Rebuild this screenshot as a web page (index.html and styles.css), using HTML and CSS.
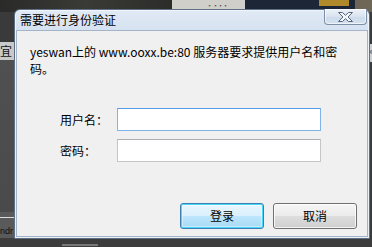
FILE: index.html
```html
<!DOCTYPE html>
<html lang="zh-CN">
<head>
<meta charset="utf-8">
<title>需要进行身份验证</title>
<link rel="stylesheet" href="styles.css">
</head>
<body>
<div class="desktop">
  <div class="bg-top">
    <div class="bg-dark"></div>
    <div class="bg-light"><span class="bg-small">▪ ▪▪▪</span></div>
    <div class="bg-navy"><span class="bg-gold"></span></div>
    <div class="bg-brown"></div>
  </div>
  <div class="bg-left">
    <span class="bg-word bg-yi">宜</span>
    <span class="bg-line"></span>
    <span class="bg-word bg-ndr">ndr</span>
  </div>
  <div class="bg-right">
    <span class="bg-word bg-a">阿</span>
  </div>
  <div class="bg-bottom"><span class="bg-dash"></span></div>

  <div class="dialog">
    <div class="titlebar">
      <span class="title">需要进行身份验证</span>
      <button class="close" aria-label="关闭">
        <svg width="19" height="12" viewBox="0 0 19 12">
          <path d="M2.5 1.5 L6.5 1.5 L9.5 4.3 L12.5 1.5 L16.5 1.5 L12 6 L16.5 10.5 L12.5 10.5 L9.5 7.7 L6.5 10.5 L2.5 10.5 L7 6 Z" fill="#f4f7fb" stroke="#56657a" stroke-width="1" stroke-linejoin="round"/>
        </svg>
      </button>
    </div>
    <div class="client">
      <p class="message">yeswan上的 www.ooxx.be:80 服务器要求提供用户名和密码。</p>
      <div class="form">
        <label class="label" for="u">用户名：</label>
        <input class="field field-focus" id="u" type="text">
        <label class="label" for="p">密码：</label>
        <input class="field" id="p" type="password">
      </div>
      <div class="actions">
        <button class="btn btn-default">登录</button>
        <button class="btn">取消</button>
      </div>
    </div>
  </div>
</div>
</body>
</html>
```
FILE: styles.css
```css
html, body {
  margin: 0;
  padding: 0;
}
body {
  width: 372px;
  height: 247px;
  overflow: hidden;
  background: #3b3b3b;
  font-family: "Noto Sans CJK SC", "Noto Sans", sans-serif;
}
.desktop {
  position: relative;
  width: 372px;
  height: 247px;
  background: #454545;
}
.bg-top {
  position: absolute;
  left: 0;
  top: 0;
  width: 372px;
  height: 12px;
  display: flex;
}
.bg-dark { width: 172px; background: linear-gradient(90deg, #2a2a2a, #3a3a36 50%, #2c2c2a); }
.bg-light { width: 73px; background: #d0cfca; position: relative; }
.bg-small { position: absolute; left: 35px; top: 1px; font-size: 5px; color: #555; }
.bg-navy { width: 110px; background: #1c2636; display: flex; justify-content: flex-end; }
.bg-gold { width: 30px; height: 6px; margin-right: 6px; background: #b08a2a; }
.bg-brown { flex: 1; background: #6e6656; }

.bg-left {
  position: absolute;
  left: 0;
  top: 12px;
  width: 14px;
  height: 226px;
  background: linear-gradient(180deg, #3a3a3a 0, #3a3a3a 30px, #c9c9c9 30px, #c9c9c9 48px, #505050 48px, #4a4a4a 200px, #5a5a5a 200px);
  overflow: hidden;
}
.bg-word {
  position: absolute;
  font-family: "Noto Sans CJK SC", "Noto Sans", sans-serif;
  font-size: 12px;
  line-height: 14px;
  color: #111;
}
.bg-yi { left: 0; top: 32px; }
.bg-line { position: absolute; left: 0; top: 205px; width: 14px; height: 1px; background: #ddd; }
.bg-ndr { left: 0; top: 212px; color: #0e0e0e; font-family: "Liberation Sans", sans-serif; font-size: 9px; }
.bg-right {
  position: absolute;
  left: 368px;
  top: 12px;
  width: 4px;
  height: 226px;
  background: linear-gradient(180deg, #3a3a3a 0, #3a3a3a 32px, #cfcfcf 32px, #cfcfcf 50px, #3b3b3b 50px);
  overflow: hidden;
}
.bg-a { left: 0; top: 38px; font-size: 4px; line-height: 5px; color: #222; }
.bg-bottom {
  position: absolute;
  left: 0;
  top: 238px;
  width: 372px;
  height: 9px;
  background: #3c3c3c;
}
.bg-dash { position: absolute; left: 62px; top: 6px; width: 36px; height: 2px; background: #777; }

.dialog {
  position: absolute;
  left: 14px;
  top: 9px;
  width: 352px;
  height: 227px;
  display: flex;
  flex-direction: column;
  padding: 0 1px 1px 1px;
  border: 1px solid #5f6f85;
  border-radius: 6px 6px 0 0;
  background: linear-gradient(180deg, #e1eaf5 0, #d6e2f1 20px, #cfdcec 100%);
  box-shadow: inset 0 0 0 1px rgba(255,255,255,0.55);
}
.titlebar {
  height: 20px;
  display: flex;
  align-items: flex-start;
  justify-content: space-between;
}
.title {
  margin: 2px 0 0 4px;
  font-size: 12px;
  line-height: 16px;
  color: #000;
}
.close {
  width: 43px;
  height: 16px;
  margin: -1px 1px 0 0;
  padding: 0;
  border: 1px solid #7f8fa6;
  border-top: 0;
  border-radius: 0 0 4px 4px;
  background: linear-gradient(180deg, #eef3f9, #d9e3ef 50%, #cddbeb 51%, #d5e1ef);
  box-shadow: inset 0 0 0 1px rgba(255,255,255,0.6);
  display: flex;
  align-items: center;
  justify-content: center;
}
.close svg { display: block; }
.client {
  flex: 1;
  display: flex;
  flex-direction: column;
  margin-top: 0;
  border: 1px solid #a3b4c9;
  background: #f0f0f0;
  padding: 12px 10px 7px 13px;
}
.message {
  margin: 0;
  width: 316px;
  font-size: 12px;
  line-height: 17px;
  color: #000;
}
.form {
  margin: 31px 0 0 30px;
  display: grid;
  grid-template-columns: 57px 204px;
  row-gap: 8px;
  align-items: center;
}
.label {
  font-size: 12px;
  line-height: 16px;
  color: #000;
}
.field {
  box-sizing: border-box;
  width: 204px;
  height: 23px;
  margin: 0;
  border: 1px solid #c6c6c6;
  border-top-color: #abadb3;
  background: #fff;
  outline: none;
}
.field-focus {
  border-color: #7eb4ea;
  border-top-color: #569de5;
}
.actions {
  margin-top: auto;
  display: flex;
  justify-content: flex-end;
  gap: 9px;
}
.btn {
  box-sizing: border-box;
  width: 84px;
  height: 26px;
  margin: 0;
  padding: 0;
  border: 1px solid #707070;
  border-radius: 3px;
  background: linear-gradient(180deg, #f6f6f6 0, #ebebeb 50%, #dddddd 51%, #cfcfcf 100%);
  box-shadow: inset 0 0 0 1px rgba(255,255,255,0.75);
  font-family: "Noto Sans CJK SC", "Noto Sans", sans-serif;
  font-size: 12px;
  line-height: 16px;
  color: #000;
}
.btn-default {
  border-color: #3c7fb1;
  background: linear-gradient(180deg, #eaf6fd 0, #d9f0fc 50%, #bee6fd 51%, #a7d9f5 100%);
  box-shadow: inset 0 0 0 1px #48d6fb, inset 0 0 0 2px rgba(255,255,255,0.4);
}
```
